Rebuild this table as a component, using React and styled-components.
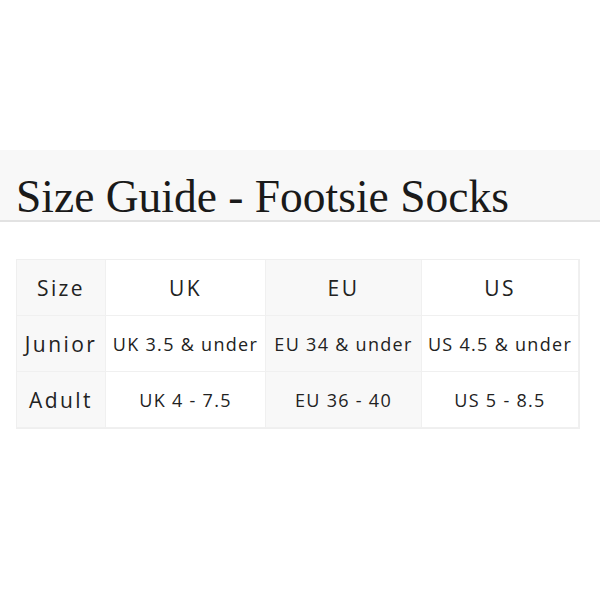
import React from "react";
import styled, { createGlobalStyle } from "styled-components";

const GlobalStyle = createGlobalStyle`
  html, body {
    margin: 0;
    padding: 0;
    background: #ffffff;
  }
  body {
    width: 600px;
    height: 600px;
    overflow: hidden;
  }
`;

const Page = styled.div`
  width: 600px;
  height: 600px;
  padding-top: 150px;
  box-sizing: border-box;
`;

const TitleBar = styled.div`
  height: 70px;
  background: #f8f8f8;
  border-bottom: 2px solid #e2e2e2;
  padding-left: 16px;
  display: flex;
  align-items: flex-end;
`;

const Title = styled.h1`
  margin: 0;
  font-family: "Liberation Serif", "Times New Roman", serif;
  font-weight: 400;
  font-size: 45.5px;
  line-height: 1;
  color: #1a1a1a;
  white-space: nowrap;
  transform: translateY(-1px);
`;

const Table = styled.div`
  margin: 37px 0 0 16px;
  width: max-content;
  display: grid;
  grid-template-columns: 89px 160px 156px 157px;
  grid-auto-rows: 56px;
  border: 1px solid #efefef;
`;

const Cell = styled.div`
  display: flex;
  align-items: center;
  justify-content: center;
  white-space: nowrap;
  background: ${(p) => (p.$shade ? "#f8f8f8" : "#ffffff")};
  border-right: 1px solid #f0f0f0;
  border-bottom: 1px solid #f0f0f0;
  font-family: "Open Sans", "Noto Sans", sans-serif;
  font-size: ${(p) => (p.$head ? "21px" : "18px")};
  letter-spacing: ${(p) => (p.$head ? "2.4px" : "1.3px")};
  color: #222222;
`;

const rows = [
  ["Size", "UK", "EU", "US"],
  ["Junior", "UK 3.5 & under", "EU 34 & under", "US 4.5 & under"],
  ["Adult", "UK 4 - 7.5", "EU 36 - 40", "US 5 - 8.5"],
];

export default function App() {
  return (
    <>
      <GlobalStyle />
      <Page>
        <TitleBar>
          <Title>Size Guide - Footsie Socks</Title>
        </TitleBar>
        <Table>
          {rows.map((row, r) =>
            row.map((text, c) => (
              <Cell
                key={`${r}-${c}`}
                $shade={c % 2 === 0}
                $head={r === 0 || c === 0}
              >
                {text}
              </Cell>
            ))
          )}
        </Table>
      </Page>
    </>
  );
}
